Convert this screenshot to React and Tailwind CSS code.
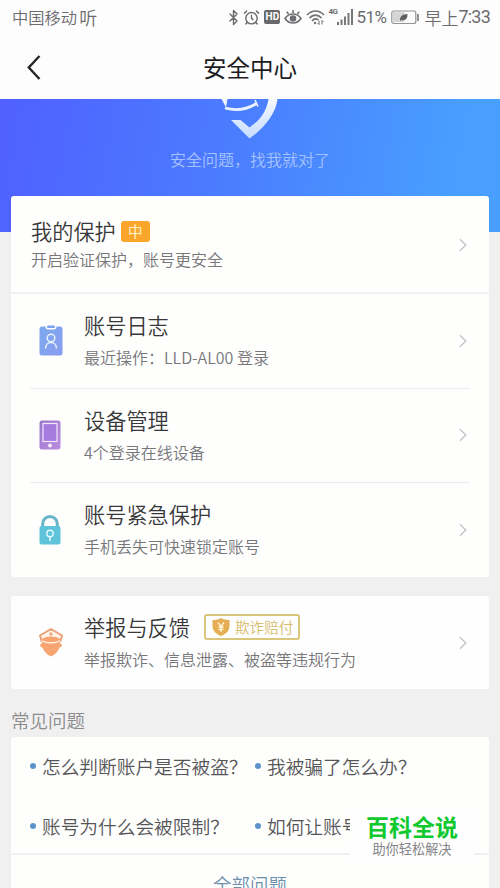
import { Bluetooth, AlarmClock } from 'lucide-react';

const Chevron = () => (
    <svg className="shrink-0" width="8" height="14" viewBox="0 0 8 14" fill="none" stroke="#c4c4c8" strokeWidth="1.4">
        <path d="M1 1.2 6.8 7 1 12.8" />
    </svg>
);

const LogIcon = () => (
    <svg width="24" height="31" viewBox="0 0 24 31" fill="none">
        <defs>
            <linearGradient id="log" x1="0" y1="0" x2="1" y2="1">
                <stop offset="0" stopColor="#7ba9ee" />
                <stop offset="1" stopColor="#8a9df0" />
            </linearGradient>
        </defs>
        <path d="M3 1.5h3.5c0 2 1 3 2.5 3h6c1.5 0 2.5-1 2.5-3H21a2.5 2.5 0 0 1 2.5 2.5v24A2.5 2.5 0 0 1 21 30.5H3A2.5 2.5 0 0 1 .5 28V4A2.5 2.5 0 0 1 3 1.5Z" fill="url(#log)" />
        <rect x="8" y="0.5" width="8" height="2.5" rx="1" fill="#7ba5ee" />
        <circle cx="12" cy="13" r="3.8" stroke="#eaf1ff" strokeWidth="1.5" />
        <path d="M6.500 23.500c0-3.500 2.300-6 5.500-6s5.500 2.500 5.500 6" stroke="#eaf1ff" strokeWidth="1.5" />
    </svg>
);

const DeviceIcon = () => (
    <svg width="22" height="30" viewBox="0 0 22 30" fill="none">
        <defs>
            <linearGradient id="device" x1="0" y1="0" x2="1" y2="1">
                <stop offset="0" stopColor="#9a78cb" />
                <stop offset="1" stopColor="#bd8ddf" />
            </linearGradient>
        </defs>
        <rect x="0.5" y="0.5" width="21" height="29" rx="2.5" fill="url(#device)" />
        <rect x="4" y="3.5" width="14" height="18" fill="#a67be0" stroke="#f2e6fb" strokeWidth="1.2" />
        <circle cx="11" cy="25.5" r="2" fill="#f6eefc" />
    </svg>
);

const LockIcon = () => (
    <svg width="22" height="30" viewBox="0 0 22 30" fill="none">
        <path d="M3.700 13V8.800a7.300 7.300 0 0 1 14.600 0V13" stroke="#68b5c9" strokeWidth="3" />
        <rect x="0.5" y="11" width="21" height="18.5" rx="2" fill="#5fc3da" />
        <circle cx="11" cy="18.5" r="3.2" stroke="#e6fbff" strokeWidth="1.4" />
        <path d="M11 21.500v4.500" stroke="#e6fbff" strokeWidth="1.5" />
    </svg>
);

const PoliceIcon = () => (
    <svg width="26" height="30" viewBox="0 0 26 30" fill="none">
        <path d="M13 2 24 8.500 22.500 14h-19L2 8.500Z" fill="#fff3ea" stroke="#e8a17a" strokeWidth="2" strokeLinejoin="round" />
        <path d="M13 5v4M11 7h4" stroke="#e8a17a" strokeWidth="1.2" />
        <path d="M4 12c2.500-1.800 5.500-2.500 9-2.500s6.500.7 9 2.500v4.500c1.300.1 2 .8 1.800 2-.2 1.200-1 1.900-2.300 2-1 3.500-4 7-8.500 9-4.500-2-7.500-5.500-8.500-9-1.300-.1-2.100-.8-2.300-2-.2-1.200.500-1.900 1.800-2Z" fill="#f9a571" />
        <path d="M4 13.500c2.800 3 15.200 3 18 0" stroke="#fff0e4" strokeWidth="1.4" />
    </svg>
);

const rows = [
    { title: '账号日志', desc: '最近操作：LLD-AL00 登录', icon: <LogIcon /> },
    { title: '设备管理', desc: '4个登录在线设备', icon: <DeviceIcon /> },
    { title: '账号紧急保护', desc: '手机丢失可快速锁定账号', icon: <LockIcon /> },
];

const StatusBar = () => (
    <div className="flex h-[34px] items-center pl-3 pr-[11px] text-[16.3px] leading-none text-[#6c6c6f]">
        <span>中国移动</span>
        <span className="ml-0.5 text-[18px]">听</span>
        <div className="ml-auto flex items-center">
            <Bluetooth size={17} strokeWidth={2} />
            <AlarmClock size={17} strokeWidth={2} className="ml-px" />
            <span className="ml-[4px] flex h-[14px] w-[16px] items-center justify-center rounded-[2px] bg-[#69696c] font-['Roboto'] text-[10px] font-bold text-white">HD</span>
            <svg className="ml-1" width="18" height="17" viewBox="0 0 18 17" fill="none" stroke="#707073" strokeWidth="1.6">
                <path d="M1 9.500c4-6 12-6 16 0-4 6-12 6-16 0ZM9 4V1M4.500 5 2.800 2.600M13.500 5l1.700-2.400" />
                <circle cx="9" cy="9.5" r="2.5" fill="#707073" />
            </svg>
            <svg className="ml-[4px]" width="19" height="17" viewBox="0 0 19 17" fill="none" stroke="#707073" strokeWidth="1.6">
                <path d="M1 6c5-5.300 12-5.300 17 0M3.500 9c3.500-3.800 8.500-3.800 12 0M6 12c2-2.300 4.500-2.600 6.500-1" />
                <circle cx="9" cy="14" r="1.2" fill="#707073" stroke="none" />
                <path d="M13 11.500v4M11.500 14l1.500 1.500M16 15.500v-4M17.500 13 16 11.500" strokeWidth="1" />
            </svg>
            <span className="ml-[3px] self-start font-['Roboto'] text-[8px] font-bold tracking-[-0.5px]">4G</span>
            <svg className="-ml-px" width="18" height="16" viewBox="0 0 18 16" fill="#77777a">
                <path d="M1 13h2v3H1zM4.500 10.500h2V16h-2zM8 7.500h2V16H8zM11.500 4h2v12h-2zM15 0h2v16h-2z" />
            </svg>
            <span className="ml-[2px] font-['Roboto'] text-[17px] font-normal tracking-[-0.5px]">51%</span>
            <svg className="ml-[5px]" width="28" height="15" viewBox="0 0 28 15" fill="none">
                <rect x="0.8" y="1" width="24" height="12.5" rx="2" stroke="#929295" strokeWidth="1.2" />
                <rect x="2" y="2.2" width="11.5" height="10" fill="#d4d4d6" />
                <path d="M9 11c-.5-4 2-7 7.500-7 .2 4.500-2 7-6 6Z" fill="#5f5f62" />
                <path d="M27 4v7" stroke="#77777a" strokeWidth="1.6" />
            </svg>
            <span className="ml-[5px] text-[17px]">早上</span>
            <span className="-mr-px font-['Roboto'] text-[18px] font-normal tracking-[-0.8px]">7:33</span>
        </div>
    </div>
);

const Question = ({ children }) => (
    <div className="flex items-center overflow-hidden whitespace-nowrap text-[18.7px] leading-7">
        <span className="mr-[6px] h-1.5 w-1.5 shrink-0 rounded-full bg-[#5b94cb]" />
        {children}
    </div>
);

export default function App() {
    return (
        <div className="relative h-[888px] w-[500px] overflow-hidden bg-[#f1f0f0] font-['Noto_Sans_CJK_SC',sans-serif] font-[350] text-[#38383a]">
            <header className="h-[99px] bg-[#fdfdfe]">
                <StatusBar />
                <div className="grid h-[67px] grid-cols-[1fr_auto_1fr] items-center px-[27px]">
                    <svg width="14" height="26" viewBox="0 0 14 26" fill="none" stroke="#252525" strokeWidth="2.4">
                        <path d="M12.500 1 1.800 12.500l10.700 11.500" />
                    </svg>
                    <h1 className="text-[23.5px] font-normal leading-none text-[#1d1d1f]">安全中心</h1>
                </div>
            </header>

            <section className="flex h-[133px] flex-col items-center bg-[linear-gradient(100deg,#5060ff_0%,#4b7cff_45%,#489fff_90%)]">
                <svg width="60" height="40" viewBox="0 0 60 40" fill="none">
                    <defs>
                        <linearGradient id="shield" x1="0" y1="0" x2="0" y2="1">
                            <stop offset="0" stopColor="#f6f9ff" />
                            <stop offset="1" stopColor="#c6dcff" />
                        </linearGradient>
                    </defs>
                    <path d="M48.500 0h9C56 14.500 44 29.500 29.500 39.500L11 21h9.500l9 7.500C41 20.500 46.500 12 48.500 0Z" fill="url(#shield)" />
                    <path d="M1.500 0h6L6 8.500Z" fill="#edf4ff" />
                    <path d="M5 9c13 3.500 22 1.500 31.500-4.500" stroke="#e9f2ff" strokeWidth="2.8" />
                    <path d="m35 1 3 6.500" stroke="#e9f2ff" strokeWidth="1.6" />
                </svg>
                <p className="mt-2 text-[16px] leading-6 text-[#a6c2ff]">安全问题，找我就对了</p>
            </section>

            <main className="relative -mt-9 px-[11px]">
                <div className="rounded-[3px] bg-[#fefefd]">
                    <div className="flex h-[98px] items-center justify-between border-b-2 border-[#f1f0f2] pl-5 pr-[22px] pt-px">
                        <div className="pt-px">
                            <div className="flex items-center">
                                <h2 className="text-[21.2px] leading-7">我的保护</h2>
                                <span className="ml-[5px] flex h-[21px] w-[29px] items-center justify-center rounded-[3px] bg-[#fba62a] text-[14.5px] font-normal leading-none text-[#fff5c9]">中</span>
                            </div>
                            <p className="text-[16px] leading-7 text-[#77777a]">开启验证保护，账号更安全</p>
                        </div>
                        <Chevron />
                    </div>
                    <div className="px-[19px]">
                        {rows.map((row) => (
                            <div key={row.title} className="flex h-[94.5px] items-center border-b border-[#ebebf1] pr-[3px] last:h-[94px] last:border-b-0 last:pb-px">
                                <div className="flex w-[54px] shrink-0 justify-start pl-[9px]">{row.icon}</div>
                                <div className="flex-1 pt-px">
                                    <h2 className="text-[21.2px] leading-8">{row.title}</h2>
                                    <p className="text-[16px] leading-8 text-[#77777a]">{row.desc}</p>
                                </div>
                                <Chevron />
                            </div>
                        ))}
                    </div>
                </div>

                <div className="mt-[19px] flex h-[93px] items-center rounded-[3px] bg-[#fefefe] pl-[27px] pr-[22px]">
                    <div className="w-[46px] shrink-0 -mt-px"><PoliceIcon /></div>
                    <div className="flex-1">
                        <div className="flex items-center">
                            <h2 className="text-[21.2px] leading-8">举报与反馈</h2>
                            <span className="mt-px ml-[14px] flex h-[26px] w-[96px] items-center rounded-[3px] border-2 border-[#dac77b] pl-[6px] text-[14.6px] leading-none text-[#d8bd70]">
                                <svg className="mr-[5px] shrink-0" width="18" height="18" viewBox="0 0 18 18">
                                    <path d="M9 0c2.500 1.500 5 2 8.500 2v6c0 5-3.500 8-8.500 10C4 16 .5 13 .5 8V2C4 2 6.500 1.500 9 0Z" fill="#e5ae53" />
                                    <path d="m6 4.500 3 4 3-4M9 8.500V14M6.500 9h5M6.500 11.300h5" fill="none" stroke="#fff7dc" strokeWidth="1.3" />
                                </svg>
                                欺诈赔付
                            </span>
                        </div>
                        <p className="text-[16px] leading-8 text-[#77777a]">举报欺诈、信息泄露、被盗等违规行为</p>
                    </div>
                    <Chevron />
                </div>

                <h3 className="flex h-[48px] items-center pt-[14px] text-[18.5px] leading-none text-[#8b8b8e]">常见问题</h3>

                <div className="h-[170px] rounded-[3px] bg-[#fefefd]">
                    <div className="grid h-[118px] grid-cols-[225px_95px] content-start gap-y-[32px] border-b-2 border-[#f1f0f2] pl-[19px] pt-[15px] text-[#565659]">
                        <Question>怎么判断账户是否被盗？</Question>
                        <div className="-mr-20"><Question>我被骗了怎么办？</Question></div>
                        <Question>账号为什么会被限制？</Question>
                        <Question>如何让账号</Question>
                    </div>
                    <p className="pt-[15px] text-center text-[18.5px] leading-7 text-[#6d8fae]">全部问题</p>
                </div>
            </main>

            <div className="absolute left-[350px] top-[808px] flex h-[57px] w-[124px] flex-col items-center justify-center bg-[#fefefe]">
                <span className="text-[23px] font-bold leading-[24px] text-[#0fc92f]">百科全说</span>
                <span className="mt-px text-[13.2px] font-normal leading-[20px] text-[#858588]">助你轻松解决</span>
            </div>
        </div>
    );
}
